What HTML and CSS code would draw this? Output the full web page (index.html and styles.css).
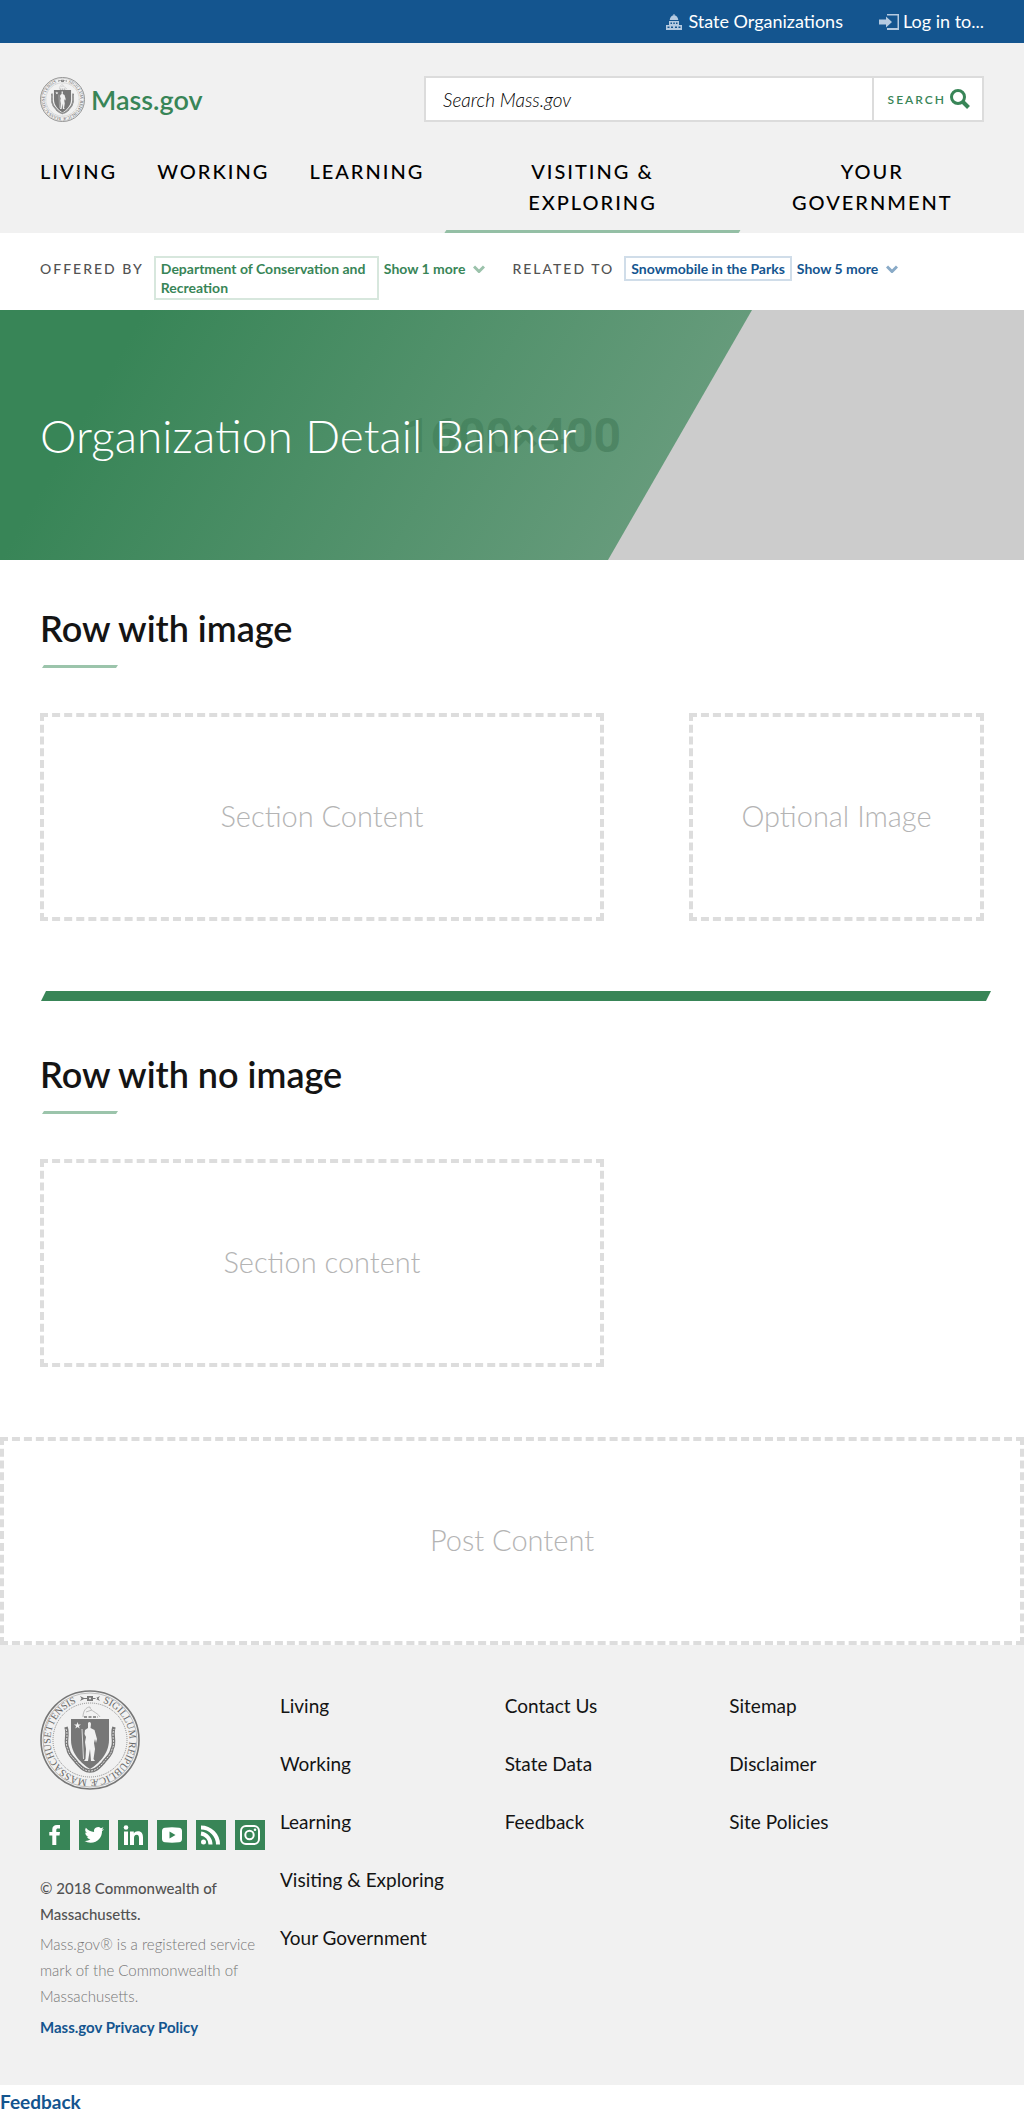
FILE: index.html
```html
<!DOCTYPE html>
<html lang="en">
<head>
<meta charset="utf-8">
<title>Organization Detail Banner | Mass.gov</title>
<meta name="viewport" content="width=device-width, initial-scale=1">
<link rel="stylesheet" href="styles.css">
</head>
<body>
<svg class="sprite" aria-hidden="true">
  <defs>
    <path id="seal-ring" d="M50 10.500a39.500 39.500 0 0 1 0 79a39.500 39.500 0 0 1 0-79"/>
    <symbol id="seal" viewBox="0 0 100 100">
      <circle cx="50" cy="50" r="49" fill="none" stroke="#777" stroke-width="1.6"/>
      <circle cx="50" cy="50" r="47" fill="none" stroke="#999" stroke-width=".6"/>
      <circle cx="50" cy="50" r="37" fill="none" stroke="#888" stroke-width="1" stroke-dasharray="1 1"/>
      <text class="seal-text" transform="rotate(19 50 50)"><textPath href="#seal-ring">SIGILLUM REIPUBLICÆ MASSACHUSETTENSIS</textPath></text>
      <path fill="#777" d="M40 6l5 2.500-5 2.500 1.500-2.500zM60 6l-5 2.500 5 2.500-1.500-2.500zM47 6h6v5h-6zM43 8h14v1H43z"/>
      <circle cx="50" cy="8.500" r="1" fill="#f1f1f1"/>
      <path d="M43 27c0-6 3-10 7-10 0 4 7 5 10 10M46 22l6-2" fill="none" stroke="#bbb" stroke-width="1"/>
      <path d="M44 27h14" stroke="#777" stroke-width="1.500" stroke-dasharray="3 1.500"/>
      <path fill="#777" d="M31 29h38v21c0 14-11 24-19 29-8-5-19-15-19-29z"/>
      <path fill="#f1f1f1" d="M37.500 32l.9 2.500h2.600l-2.100 1.600.8 2.500-2.200-1.500-2.200 1.500.8-2.500-2.100-1.600h2.600zM48 33c1-2 3-1 3 1l-.5 4 4 2 2.500 9-1 4-1-4-1 4 1 6-1.500 10 1.500 2h-4l-1-12-2 12h-4l1.500-2 .5-10-1-7 1-5-1.500-3 .5-4 3-2z"/>
      <path d="M42 39l1.500 30" stroke="#f1f1f1" stroke-width=".8"/>
      <path d="M26 37c3 8-2 15 2 22 1 7 6 9 9 14 4 4 7 8 13 8s9-4 13-8c3-5 8-7 9-14 4-7-1-14 2-22" fill="none" stroke="#777" stroke-width="3.500"/>
      <path d="M26 39c3 8-2 14 2 20 1 7 6 9 9 14 4 4 7 8 13 8s9-4 13-8c3-5 8-7 9-14 4-6-1-12 2-20" fill="none" stroke="#ddd" stroke-width="1" stroke-dasharray="2 1"/>
    </symbol>
    <symbol id="chevron" viewBox="0 0 12 8"><path d="M1 1.500l5 5 5-5" fill="none" stroke="currentColor" stroke-width="3"/></symbol>
  </defs>
</svg>

<header class="header">
  <div class="utility">
    <a class="utility-link" href="#">
      <svg width="16" height="16" viewBox="0 0 16 16" fill="currentColor"><path d="M7.500 0h1v1.200C10.500 1.600 12 3.500 12.300 6H3.700C4 3.500 5.500 1.600 7.500 1.200zM3 7h10v4h3v5H0v-5h3zM4.500 8.500v1.500h1.500V8.500zM7.300 8.500v1.500h1.500V8.500zM10 8.500v1.500h1.500V8.500zM1.500 12.500V14h2v-1.500zM5 12.500V14h2v-1.500zM9 12.500V14h2v-1.500zM12.500 12.500V14h2v-1.500z" fill-rule="evenodd"/></svg>
      <span>State Organizations</span>
    </a>
    <a class="utility-link login" href="#">
      <svg width="20" height="16" viewBox="0 0 20 16" fill="currentColor"><path d="M0 5.500h7V2.500L13 8l-6 5.500v-3H0zM8 0h12v16H8v-2h10.500V1.500H8z"/></svg>
      <span>Log in to...</span>
    </a>
  </div>
  <div class="masthead">
    <div class="brand-row">
      <a class="brand" href="#"><svg class="brand-seal" role="img" aria-label="Massachusetts state seal"><use href="#seal"/></svg><span>Mass.gov</span></a>
      <form class="search">
        <input class="search-input" type="search" aria-label="Search Mass.gov" placeholder="Search Mass.gov">
        <button class="search-button" type="button"><span>Search</span><svg width="20" height="20" viewBox="0 0 20 20" fill="none" stroke="currentColor"><circle cx="8" cy="8" r="6.500" stroke-width="3"/><path d="M12.500 12.500l6 6" stroke-width="4"/></svg></button>
      </form>
    </div>
    <nav class="nav" aria-label="Main">
      <a class="nav-item" href="#">Living</a>
      <a class="nav-item" href="#">Working</a>
      <a class="nav-item" href="#">Learning</a>
      <a class="nav-item active" href="#"><span>Visiting &amp; Exploring</span></a>
      <a class="nav-item" href="#"><span>Your Government</span></a>
    </nav>
  </div>
</header>

<main>
  <div class="relations">
    <div class="relation offered">
      <span class="relation-label">Offered by</span>
      <a class="tag" href="#">Department of Conservation and Recreation</a>
      <button class="more" type="button">Show 1 more<svg width="12" height="8"><use href="#chevron"/></svg></button>
    </div>
    <div class="relation related">
      <span class="relation-label">Related to</span>
      <a class="tag" href="#">Snowmobile in the Parks</a>
      <button class="more" type="button">Show 5 more<svg width="12" height="8"><use href="#chevron"/></svg></button>
    </div>
  </div>

  <section class="banner">
    <span class="banner-size" aria-hidden="true">1600×400</span>
    <div class="banner-shade"></div>
    <h1 class="banner-title">Organization Detail Banner</h1>
  </section>

  <section class="row">
    <h2 class="row-title">Row with image</h2>
    <div class="row-columns">
      <div class="placeholder">Section Content</div>
      <div class="placeholder">Optional Image</div>
    </div>
  </section>
  <div class="divider"></div>
  <section class="row">
    <h2 class="row-title">Row with no image</h2>
    <div class="row-columns">
      <div class="placeholder">Section content</div>
    </div>
  </section>
  <div class="placeholder">Post Content</div>
</main>

<footer class="footer">
  <div class="footer-info">
    <svg class="footer-seal" role="img" aria-label="Massachusetts state seal"><use href="#seal"/></svg>
    <div class="social">
      <a href="#" aria-label="Facebook"><svg viewBox="0 0 30 30"><path d="M12.300 25v-9.500H9.300V12h3V9.500C12.300 6.500 14 5 17 5h3v3.500h-2c-1.400 0-1.700.6-1.700 1.700V12H20l-.5 3.500h-3.200V25z"/></svg></a>
      <a href="#" aria-label="Twitter"><svg viewBox="0 0 30 30"><path d="M25 8.900a8 8 0 0 1-2.300.6 4 4 0 0 0 1.700-2.200 8 8 0 0 1-2.500 1 4 4 0 0 0-6.800 3.600 11.300 11.300 0 0 1-8.200-4.200 4 4 0 0 0 1.200 5.300 4 4 0 0 1-1.800-.5 4 4 0 0 0 3.200 4 4 4 0 0 1-1.800.1 4 4 0 0 0 3.700 2.700A8 8 0 0 1 5.500 21a11.300 11.300 0 0 0 6.100 1.800c7.400 0 11.700-6.200 11.400-11.800a8 8 0 0 0 2-2.100z"/></svg></a>
      <a href="#" aria-label="LinkedIn"><svg viewBox="0 0 30 30"><circle cx="8" cy="7.500" r="2.300"/><path d="M6 11.500h4V25H6zM12 11.500h3.800v1.900c.8-1.400 2.200-2.200 4-2.200 4 0 5.200 2.500 5.200 6.300V25h-4v-6.800c0-2-.5-3.400-2.300-3.400-2 0-2.700 1.400-2.700 3.400V25h-4z"/></svg></a>
      <a href="#" aria-label="YouTube"><svg viewBox="0 0 30 30"><path fill-rule="evenodd" d="M8 7.800q7-.9 14 0 3 .2 3 3.200v8q0 3-3 3.200-7 .9-14 0-3-.2-3-3.200v-8q0-3 3-3.200zM12.500 11.500v7l6-3.500z"/></svg></a>
      <a href="#" aria-label="RSS"><svg viewBox="0 0 30 30"><circle cx="7.500" cy="22" r="2.500"/><path d="M5 13.500a11 11 0 0 1 9.500 11M5 7.500a17 17 0 0 1 17 17" fill="none" stroke="#fff" stroke-width="4"/></svg></a>
      <a href="#" aria-label="Instagram"><svg viewBox="0 0 30 30"><g fill="none" stroke="#fff" stroke-width="2"><rect x="6" y="6" width="18" height="18" rx="5"/><circle cx="14.500" cy="15" r="4.200"/></g><circle cx="20" cy="9.800" r="1.300"/></svg></a>
    </div>
    <p class="copyright">© 2018 Commonwealth of Massachusetts.</p>
    <p class="service-mark">Mass.gov® is a registered service mark of the Commonwealth of Massachusetts.</p>
    <a class="privacy" href="#">Mass.gov Privacy Policy</a>
  </div>
  <nav class="footer-links" aria-label="Footer">
    <ul><li><a href="#">Living</a></li><li><a href="#">Working</a></li><li><a href="#">Learning</a></li><li><a href="#">Visiting &amp; Exploring</a></li><li><a href="#">Your Government</a></li></ul>
    <ul><li><a href="#">Contact Us</a></li><li><a href="#">State Data</a></li><li><a href="#">Feedback</a></li></ul>
    <ul><li><a href="#">Sitemap</a></li><li><a href="#">Disclaimer</a></li><li><a href="#">Site Policies</a></li></ul>
  </nav>
</footer>
<a class="feedback" href="#">Feedback</a>
</body>
</html>
```
FILE: styles.css
```css
*, *::before, *::after { box-sizing: border-box; }

body {
  margin: 0;
  background: #fff;
  color: #141414;
  font-family: Lato, "Open Sans", sans-serif;
  font-size: 18px;
}

a { color: inherit; text-decoration: none; }
button, input { font: inherit; color: inherit; }
svg { display: block; flex: none; }
h1, h2, p, ul { margin: 0; padding: 0; }
ul { list-style: none; }
.sprite { position: absolute; width: 0; height: 0; }
.seal-text { font: 400 10px "Liberation Serif", serif; fill: #666; }

/* Header */
.utility {
  display: flex;
  justify-content: flex-end;
  gap: 36px;
  padding: 0 40px;
  background: #14558f;
  color: #fff;
  line-height: 43px;
}
.utility-link { display: flex; align-items: center; gap: 6px; }
.utility-link.login { gap: 4px; }
.utility-link svg { color: #b5cae0; }

.masthead { padding: 33px 40px 0; background: #f1f1f1; }
.brand-row { display: flex; align-items: center; justify-content: space-between; }
.brand { display: flex; align-items: center; gap: 6px; color: #388557; font-size: 27px; font-weight: 600; }
.brand-seal { width: 45px; height: 45px; }

.search {
  display: flex;
  width: 560px;
  height: 46px;
  border: 2px solid #dcdcdc;
  background: #fff;
}
.search-input {
  flex: 1;
  min-width: 0;
  border: 0;
  padding: 0 17px;
  background: transparent;
  font-size: 19px;
  font-style: italic;
  font-weight: 300;
  outline: 0;
}
.search-input::placeholder { color: #000; opacity: 1; }
.search-button {
  display: flex;
  align-items: center;
  gap: 4px;
  border: 0;
  border-left: 2px solid #dcdcdc;
  padding: 0 12px 0 14px;
  background: transparent;
  color: #388557;
  font-size: 12px;
  font-weight: 600;
  letter-spacing: 2px;
  text-transform: uppercase;
}

.nav {
  display: grid;
  grid-template-columns: auto auto auto 298fr 265fr;
  margin: 34px -20px 0;
}
.nav-item {
  display: flex;
  justify-content: center;
  padding: 0 20px 15px;
  color: #000;
  font-size: 20px;
  font-weight: 500;
  line-height: 31px;
  letter-spacing: 2px;
  text-align: center;
  text-transform: uppercase;
}
.nav-item span { max-width: 180px; }
.nav-item.active {
  background: linear-gradient(#94bfa5, #94bfa5) bottom / 100% 3px no-repeat;
  clip-path: polygon(2px 0, 100% 0, 100% calc(100% - 3px), calc(100% - 2px) 100%, 0 100%, 2px calc(100% - 3px));
}

/* Relations */
.relations { display: flex; gap: 27px; padding: 23px 40px 10px; }
.relation { display: flex; align-items: flex-start; gap: 5px; font-size: 14px; font-weight: 700; line-height: 19px; }
.relation-label {
  margin-right: 5px;
  padding-top: 3px;
  color: #535353;
  font-weight: 500;
  letter-spacing: 2px;
  text-transform: uppercase;
}
.tag { border: 2px solid; padding: 1px 5px; }
.offered .tag { width: 225px; border-color: #d7e7dd; }
.related .tag { border-color: #d0dde9; }
.offered { color: #388557; }
.related { color: #14558f; }
.more { display: flex; align-items: center; gap: 8px; border: 0; padding: 3px 0; background: none; }
.offered .more svg { color: #9bc2ab; }
.related .more svg { color: #89aac7; }

/* Banner */
.banner {
  display: grid;
  grid-template-columns: 100%;
  align-items: center;
  height: 250px;
  background: #ccc;
}
.banner > * { grid-area: 1 / 1; }
.banner-size {
  color: #868686;
  font: 700 48px Roboto, sans-serif;
  text-align: center;
}
.banner-shade {
  width: 74%;
  height: 100%;
  background: linear-gradient(120deg, #388557 16%, rgba(56, 133, 87, .69) 84%);
  clip-path: polygon(0 0, 752px 0, 608px 100%, 0 100%);
}
.banner-title {
  z-index: 1;
  padding: 0 40px;
  color: #fff;
  font-size: 46px;
  font-weight: 300;
}

/* Rows */
.row { padding: 46px 40px 70px; }
.row-title { font-size: 36px; font-weight: 600; line-height: 44px; }
.row-title::after {
  content: "";
  display: block;
  width: 76px;
  height: 3px;
  margin: 15px 0 45px 2px;
  background: #9bc4ab;
  clip-path: polygon(2px 0, 100% 0, 74px 100%, 0 100%);
}
.row-columns { display: grid; grid-template-columns: 564fr 295fr; column-gap: 85px; }
.placeholder {
  display: flex;
  align-items: center;
  justify-content: center;
  border: 4px dashed #ddd;
  height: 208px;
  padding-bottom: 4px;
  color: #b4b4b4;
  font-size: 29px;
  font-weight: 300;
}
.divider {
  height: 10px;
  margin: 0 33px 5px 41px;
  background: #388557;
  clip-path: polygon(5px 0, 100% 0, calc(100% - 5px) 100%, 0 100%);
}

/* Footer */
.footer { display: flex; gap: 15px; padding: 45px 40px 45px; background: #f1f1f1; }
.footer-info { width: 225px; flex: none; font-size: 15px; line-height: 26px; }
.footer-seal { width: 100px; height: 100px; }
.social { display: flex; gap: 9px; margin: 30px 0 25px; }
.social svg { width: 30px; height: 30px; background: #388557; fill: #fff; }
.copyright { color: #535353; font-weight: 500; }
.service-mark { margin: 4px 0 5px; color: #777; font-weight: 300; }
.privacy { color: #14558f; font-weight: 700; }
.footer-links { display: grid; grid-template-columns: repeat(3, 1fr); flex: 1; padding-right: 30px; font-size: 19px; line-height: 32px; }
.footer-links li { margin-bottom: 26px; }
.feedback { display: block; color: #14558f; font-size: 19px; font-weight: 700; line-height: 33px; }
```
